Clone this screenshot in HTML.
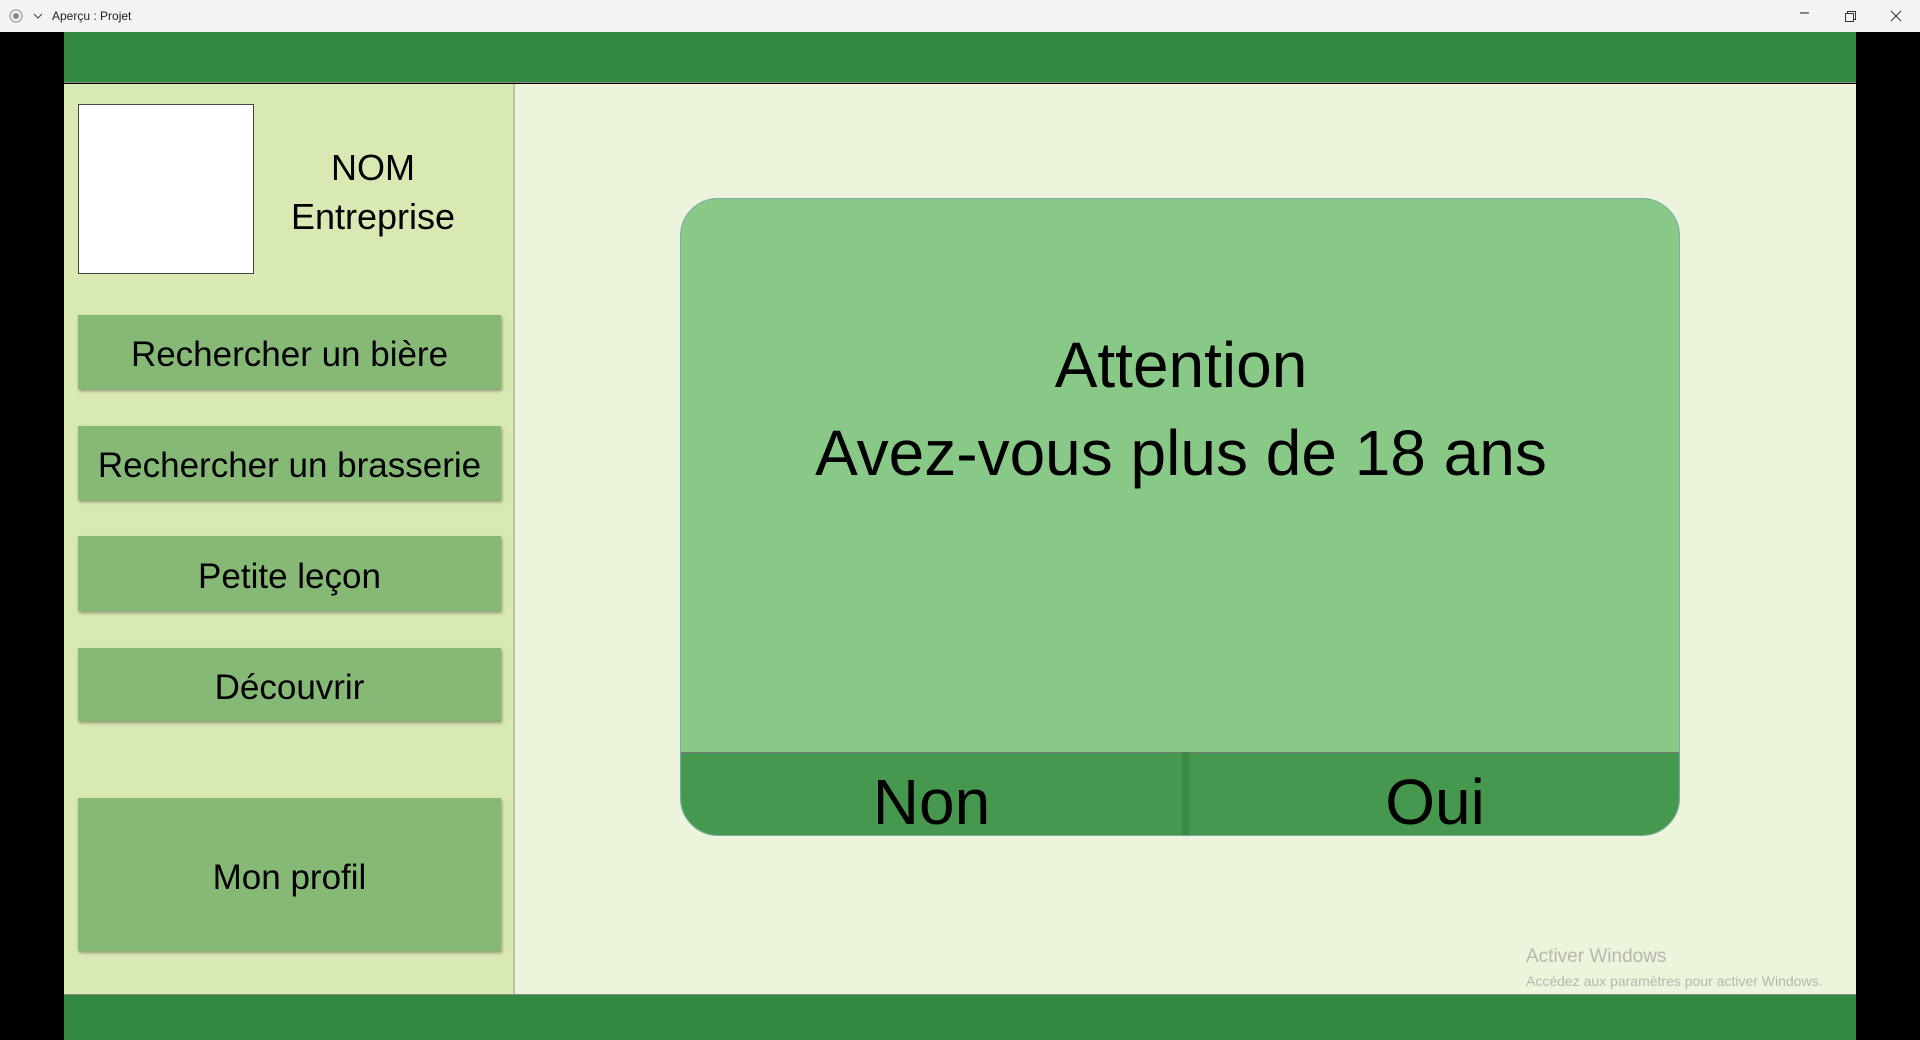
<!DOCTYPE html>
<html><head><meta charset="utf-8"><style>
*{margin:0;padding:0;box-sizing:border-box}
body{width:1920px;height:1040px;overflow:hidden;background:#000;font-family:"Segoe UI","Liberation Sans",sans-serif;position:relative}
.abs{position:absolute}
.title{left:0;top:0;width:1920px;height:32px;background:#f3f3f3;font-size:12px;color:#222}
.topbar{left:64px;top:32px;width:1792px;height:51px;background:#348a40;border-bottom:1px solid #888}
.botbar{left:64px;top:994px;width:1792px;height:46px;background:#348a40;border-top:1px solid #888}
.side{left:64px;top:84px;width:451px;height:910px;background:#d9e9b3;border-right:2px solid #b9c4aa}
.main{left:515px;top:84px;width:1341px;height:910px;background:#ecf4dc}
.logo{left:78px;top:104px;width:176px;height:170px;background:#fff;border:1.5px solid #444}
.btn{left:78px;width:423px;background:#86b876;box-shadow:1px 2px 3px rgba(0,0,0,.35);display:flex;align-items:center;justify-content:center;font-size:35px;color:#000;padding-top:6px}
.dlg{left:680px;top:198px;width:1000px;height:638px;background:#89c987;border-radius:38px;border:1px solid #7aa;overflow:hidden}
</style></head><body>
<div class="abs title">
 <svg class="abs" style="left:9px;top:9px" width="14" height="14"><circle cx="7" cy="7" r="6" fill="none" stroke="#888"/><circle cx="7" cy="7" r="3" fill="#888"/></svg>
 <svg class="abs" style="left:33px;top:12px" width="10" height="8"><path d="M1 2l4 4 4-4" fill="none" stroke="#444"/></svg>
 <span class="abs" style="left:52px;top:9px">Aperçu : Projet</span>
 <span class="abs" style="left:1800px;top:4px;font-size:16px">–</span>
 <svg class="abs" style="left:1845px;top:11px" width="11" height="11"><rect x="0.5" y="2.5" width="8" height="8" fill="none" stroke="#333"/><path d="M2.5 2.5V.5h8v8h-2" fill="none" stroke="#333"/></svg>
 <svg class="abs" style="left:1890px;top:10px" width="12" height="12"><path d="M1 1l10 10M11 1L1 11" stroke="#333"/></svg>
</div>
<div class="abs topbar"></div>
<div class="abs side"></div>
<div class="abs main"></div>
<div class="abs botbar"></div>
<div class="abs logo"></div>
<div class="abs" style="left:254px;top:143px;width:238px;text-align:center;font-size:36px;line-height:49px">NOM<br>Entreprise</div>
<div class="abs btn" style="top:315px;height:74px">Rechercher un bière</div>
<div class="abs btn" style="top:426px;height:74px">Rechercher un brasserie</div>
<div class="abs btn" style="top:536px;height:75px">Petite leçon</div>
<div class="abs btn" style="top:648px;height:73px">Découvrir</div>
<div class="abs btn" style="top:798px;height:153px">Mon profil</div>
<div class="abs dlg">
 <div class="abs" style="left:0;top:122px;width:1000px;text-align:center;font-size:64px;line-height:88px">Attention<br>Avez-vous plus de 18 ans</div>
 <div class="abs" style="left:0;top:553px;width:1000px;height:86px;background:#46984f;border-top:1px solid #777"></div>
 <div class="abs" style="left:501px;top:553px;width:7px;height:86px;background:#3b8a44"></div>
 <div class="abs" style="left:0;top:555px;width:501px;height:86px;text-align:center;font-size:64px;line-height:96px;font-weight:300">Non</div>
 <div class="abs" style="left:508px;top:555px;width:492px;height:86px;text-align:center;font-size:64px;line-height:96px;font-weight:300">Oui</div>
</div>
<div class="abs" style="left:1526px;top:946px;color:#b4b8ad;font-size:19px">Activer Windows</div>
<div class="abs" style="left:1526px;top:973px;color:#b4b8ad;font-size:14px">Accédez aux paramètres pour activer Windows.</div>
</body></html>
